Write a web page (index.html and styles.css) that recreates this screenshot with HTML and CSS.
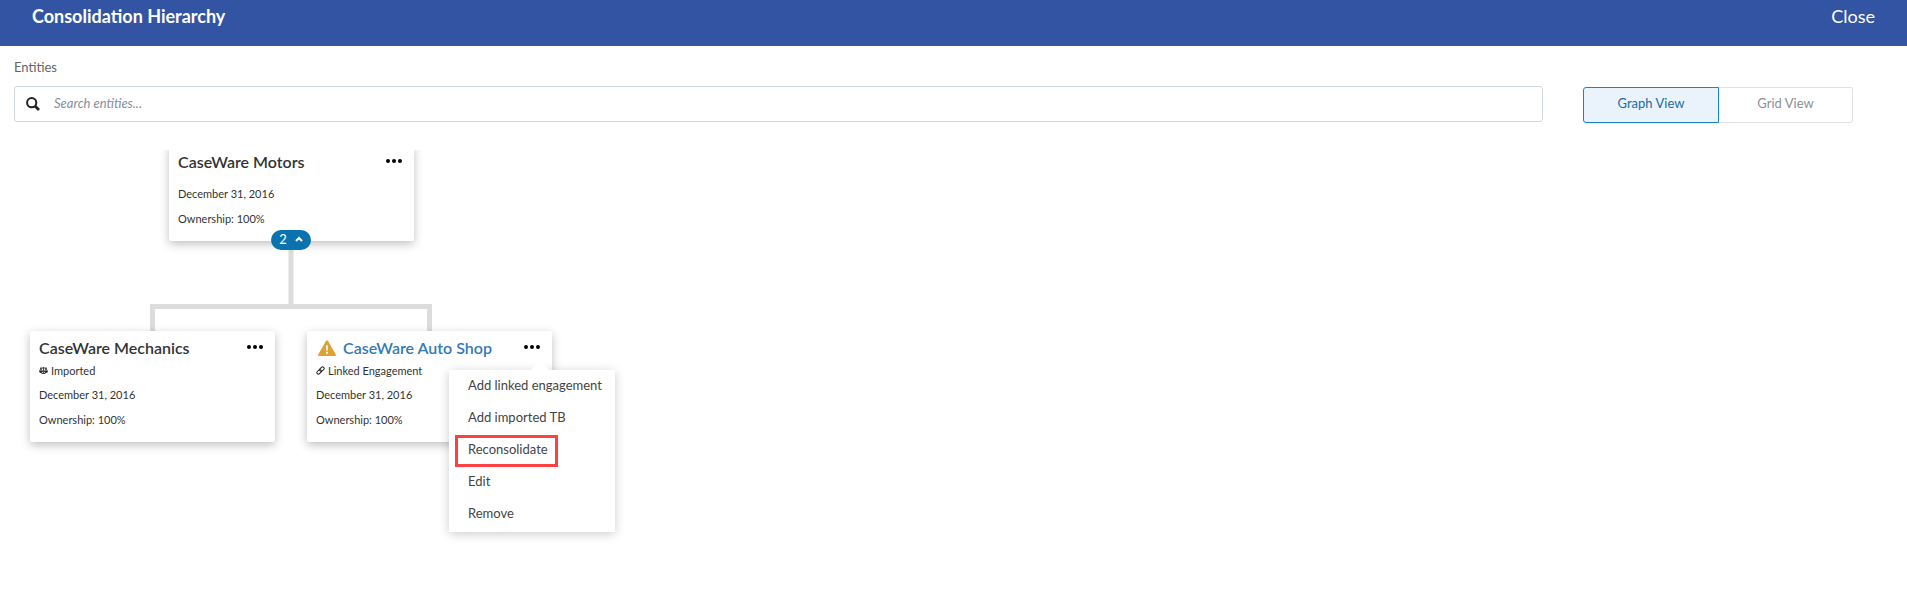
FILE: index.html
```html
<!DOCTYPE html>
<html lang="en">
<head>
<meta charset="utf-8">
<title>Consolidation Hierarchy</title>
<link rel="stylesheet" href="styles.css">
</head>
<body>
<header class="topbar">
  <h1 class="topbar-title">Consolidation Hierarchy</h1>
  <button class="topbar-close" type="button">Close</button>
</header>
<main>
  <div class="toolbar">
    <label class="toolbar-label" for="search">Entities</label>
    <div class="toolbar-row">
      <div class="search">
        <svg class="search-icon" viewBox="0 0 14 14" aria-hidden="true"><circle cx="5.7" cy="5.7" r="4.6" fill="none" stroke="currentColor" stroke-width="2"/><path d="M9 9l4 4" stroke="currentColor" stroke-width="2.6"/></svg>
        <input class="search-input" id="search" type="text" placeholder="Search entities...">
      </div>
      <div class="views">
        <button class="view view-active" type="button">Graph View</button>
        <button class="view" type="button">Grid View</button>
      </div>
    </div>
  </div>

  <section class="canvas">
    <svg class="links" width="600" height="200" aria-hidden="true"><path d="M291 90v65M152.500 185v-28.500h277V185" fill="none" stroke="#dcdcdc" stroke-width="5"/></svg>

    <article class="card card-motors">
      <div class="card-head">
        <h2 class="card-title">CaseWare Motors</h2>
        <button class="more" type="button" aria-label="More"><svg class="dots" viewBox="0 0 16 4"><circle cx="2" cy="2" r="2"/><circle cx="8" cy="2" r="2"/><circle cx="14" cy="2" r="2"/></svg></button>
      </div>
      <p class="card-line">December 31, 2016</p>
      <p class="card-line">Ownership: 100%</p>
      <button class="count" type="button">2 <svg class="chevron" viewBox="0 0 8 6" aria-hidden="true"><path d="M1 5l3-3 3 3" fill="none" stroke="currentColor" stroke-width="2"/></svg></button>
    </article>

    <article class="card card-mechanics">
      <div class="card-head">
        <h2 class="card-title">CaseWare Mechanics</h2>
        <button class="more" type="button" aria-label="More"><svg class="dots" viewBox="0 0 16 4"><circle cx="2" cy="2" r="2"/><circle cx="8" cy="2" r="2"/><circle cx="14" cy="2" r="2"/></svg></button>
      </div>
      <p class="card-source"><svg class="source-icon" viewBox="0 0 9 9" aria-hidden="true"><path d="M1 2h7M4.500 1v6.500M2.500 7.500h4M2 2L.7 5h2.600zM7 2L5.700 5h2.600z" fill="none" stroke="currentColor" stroke-width=".8"/><path d="M.1 5h3.800a1.900 2 0 0 1-3.800 0zM5.100 5h3.800a1.900 2 0 0 1-3.800 0z" fill="currentColor"/></svg>Imported</p>
      <p class="card-line">December 31, 2016</p>
      <p class="card-line">Ownership: 100%</p>
    </article>

    <article class="card card-auto">
      <div class="card-head">
        <svg class="warning" viewBox="0 0 18 16" aria-hidden="true"><path d="M9 .3a1 1 0 0 1 .9.500L17.800 14.500a1 1 0 0 1-.9 1.400H1.100a1 1 0 0 1-.9-1.400L8.100.8A1 1 0 0 1 9 .3z" fill="#dfa12f"/><path d="M7.900 5.500h2.200l-.3 5H8.200zM8 11.800h2v2H8z" fill="#fff"/></svg>
        <h2 class="card-title"><a class="card-link" href="#">CaseWare Auto Shop</a></h2>
        <button class="more" type="button" aria-label="More"><svg class="dots" viewBox="0 0 16 4"><circle cx="2" cy="2" r="2"/><circle cx="8" cy="2" r="2"/><circle cx="14" cy="2" r="2"/></svg></button>
      </div>
      <p class="card-source"><svg class="source-icon" viewBox="0 0 10 10" aria-hidden="true"><g transform="rotate(-45 5 5)" fill="none" stroke="currentColor" stroke-width="1.100"><rect x="0" y="3.300" width="5.600" height="3.400" rx="1.700"/><rect x="4.400" y="3.300" width="5.600" height="3.400" rx="1.700"/></g></svg>Linked Engagement</p>
      <p class="card-line">December 31, 2016</p>
      <p class="card-line">Ownership: 100%</p>
      <div class="menu">
        <button class="menu-item" type="button">Add linked engagement</button>
        <button class="menu-item" type="button">Add imported TB</button>
        <button class="menu-item menu-item-marked" type="button">Reconsolidate</button>
        <button class="menu-item" type="button">Edit</button>
        <button class="menu-item" type="button">Remove</button>
      </div>
    </article>
  </section>
</main>
</body>
</html>
```
FILE: styles.css
```css
* { box-sizing: border-box; }
body {
  margin: 0;
  min-height: 100vh;
  display: flex;
  flex-direction: column;
  background: #fff;
  color: #333;
  font-family: Lato, "Open Sans", sans-serif;
  font-size: 13px;
}
main { flex: 1; display: flex; flex-direction: column; }
h1, h2, p { margin: 0; }
button { font: inherit; color: inherit; background: none; border: 0; padding: 0; cursor: pointer; }

.topbar {
  display: flex;
  justify-content: space-between;
  align-items: flex-start;
  padding: 5px 32px 19px;
  background: #3354a2;
  color: #fff;
  font-size: 18px;
  line-height: 22px;
}
.topbar-title { font-size: 18px; font-weight: 700; }

.toolbar { padding: 11px 54px 0 14px; }
.toolbar-label { display: block; line-height: 20px; color: #666; margin-bottom: 9px; }
.toolbar-row { display: flex; gap: 40px; align-items: flex-start; }
.search {
  flex: 1;
  height: 36px;
  display: flex;
  align-items: center;
  gap: 12px;
  padding: 0 11px;
  border: 1px solid #cfd6dd;
  border-radius: 3px;
}
.search-icon { width: 14px; height: 14px; color: #222; }
.search-input { flex: 1; border: 0; outline: 0; padding: 0 2px 2px; font: inherit; color: #333; }
.search-input::placeholder { font-style: italic; color: #84909b; opacity: 1; }
.views { display: flex; margin-top: 1px; }
.view {
  width: 134px;
  height: 36px;
  padding-bottom: 4px;
  border: 1px solid #e0e2e4;
  border-left: 0;
  border-radius: 0 3px 3px 0;
  color: #8a8f98;
}
.view-active {
  width: 136px;
  border: 1px solid #1287c8;
  border-radius: 3px 0 0 3px;
  background: #eaf3fb;
  color: #1b6ba5;
}

.canvas { position: relative; flex: 1; min-height: 440px; margin-top: 27px; overflow: hidden; }
.links { position: absolute; left: 0; top: 0; }
.card {
  position: absolute;
  width: 245px;
  padding: 6px 12px 10px 9px;
  background: #fff;
  border-radius: 2px;
  box-shadow: 0 3px 10px rgba(0, 0, 0, .25);
}
.card-motors { left: 169px; top: -5px; }
.card-mechanics { left: 30px; top: 181px; }
.card-auto { left: 307px; top: 181px; }
.card-head { display: flex; align-items: center; height: 22px; }
.card-motors .card-head { margin-bottom: 8px; }
.card-title { font-size: 16px; font-weight: 600; line-height: 22px; }
.card-link { color: #337ab7; text-decoration: none; }
.warning { width: 18px; height: 16px; margin: 0 7px 0 2px; }
.more { margin-left: auto; height: 22px; display: flex; align-items: flex-start; padding-top: 8px; }
.dots { width: 16px; height: 4px; fill: #000; }
.card-source { display: flex; align-items: center; gap: 3px; height: 23px; font-size: 11px; }
.source-icon { flex: none; width: 9px; height: 9px; color: #222; }
.card-line { font-size: 11px; line-height: 25px; }
.count {
  position: absolute;
  left: 102px;
  bottom: -9px;
  width: 40px;
  height: 20px;
  display: flex;
  align-items: center;
  justify-content: center;
  gap: 8px;
  padding-bottom: 2px;
  border-radius: 10px;
  background: #0b72b0;
  color: #fff;
  font-size: 13px;
}
.chevron { width: 8px; height: 6px; }

.menu {
  position: absolute;
  left: 142px;
  top: 39px;
  width: 166px;
  padding: 1px 6px;
  display: flex;
  flex-direction: column;
  align-items: flex-start;
  background: #fff;
  box-shadow: 0 2px 10px rgba(0, 0, 0, .2);
}
.menu::before {
  content: "";
  position: absolute;
  left: 82px;
  top: -9px;
  border: 9px solid transparent;
  border-top: 0;
  border-bottom-color: #fff;
}
.menu-item {
  height: 32px;
  padding: 0 7px 4px 10px;
  border: 3px solid transparent;
  line-height: 20px;
  color: #444;
  white-space: nowrap;
}
.menu-item-marked { border-color: #fb4141; }
```
